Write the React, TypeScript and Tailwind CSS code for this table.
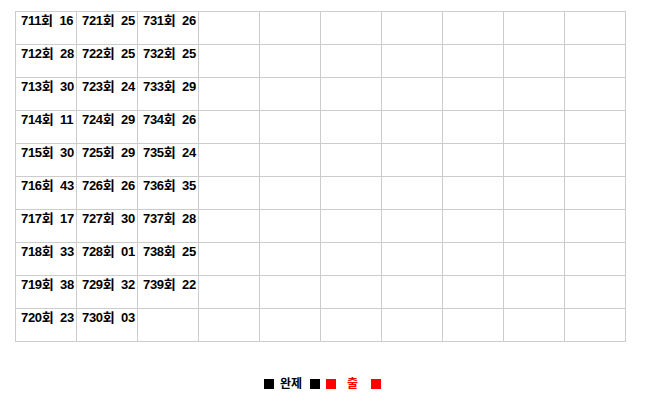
const columns: [string, string][][] = [
  [
    ['711', '16'], ['712', '28'], ['713', '30'], ['714', '11'], ['715', '30'],
    ['716', '43'], ['717', '17'], ['718', '33'], ['719', '38'], ['720', '23'],
  ],
  [
    ['721', '25'], ['722', '25'], ['723', '24'], ['724', '29'], ['725', '29'],
    ['726', '26'], ['727', '30'], ['728', '01'], ['729', '32'], ['730', '03'],
  ],
  [
    ['731', '26'], ['732', '25'], ['733', '29'], ['734', '26'], ['735', '24'],
    ['736', '35'], ['737', '28'], ['738', '25'], ['739', '22'],
  ],
]

const rows = Array.from({ length: 10 }, (_, r) => r)
const cols = Array.from({ length: 10 }, (_, c) => c)

export default function App() {
  return (
    <div className="w-[671px] h-[415px] bg-white font-['Liberation_Sans','Noto_Sans_CJK_KR',sans-serif] text-black">
      <div className="pt-[11px] pl-[15px]">
        <table className="border-collapse table-fixed w-[611px]">
          <tbody>
            {rows.map((r) => (
              <tr key={r} className="h-[33px]">
                {cols.map((c) => {
                  const item = columns[c]?.[r]
                  return (
                    <td
                      key={c}
                      className="w-[61px] border border-[#cccccc] align-top pt-[1px] pl-[5px] pr-0 text-[13px] leading-[16px] font-bold whitespace-nowrap tracking-[-0.3px]"
                    >
                      {item && (
                        <span>
                          {item[0]}회{'\u00a0\u00a0'}{item[1]}
                        </span>
                      )}
                    </td>
                  )
                })}
              </tr>
            ))}
          </tbody>
        </table>
      </div>

      {/* legend */}
      <div className="mt-[35px] w-[645px] flex items-center justify-center text-[12px] font-bold leading-[14px]">
        <span className="w-[10px] h-[10px] bg-black" />
        <span className="ml-[6px]">완제</span>
        <span className="ml-[8px] w-[10px] h-[10px] bg-black" />
        <span className="ml-[6px] w-[10px] h-[10px] bg-[#ff0000]" />
        <span className="ml-[11px] text-[#ff0000]">출</span>
        <span className="ml-[13px] w-[10px] h-[10px] bg-[#ff0000]" />
      </div>
    </div>
  )
}
